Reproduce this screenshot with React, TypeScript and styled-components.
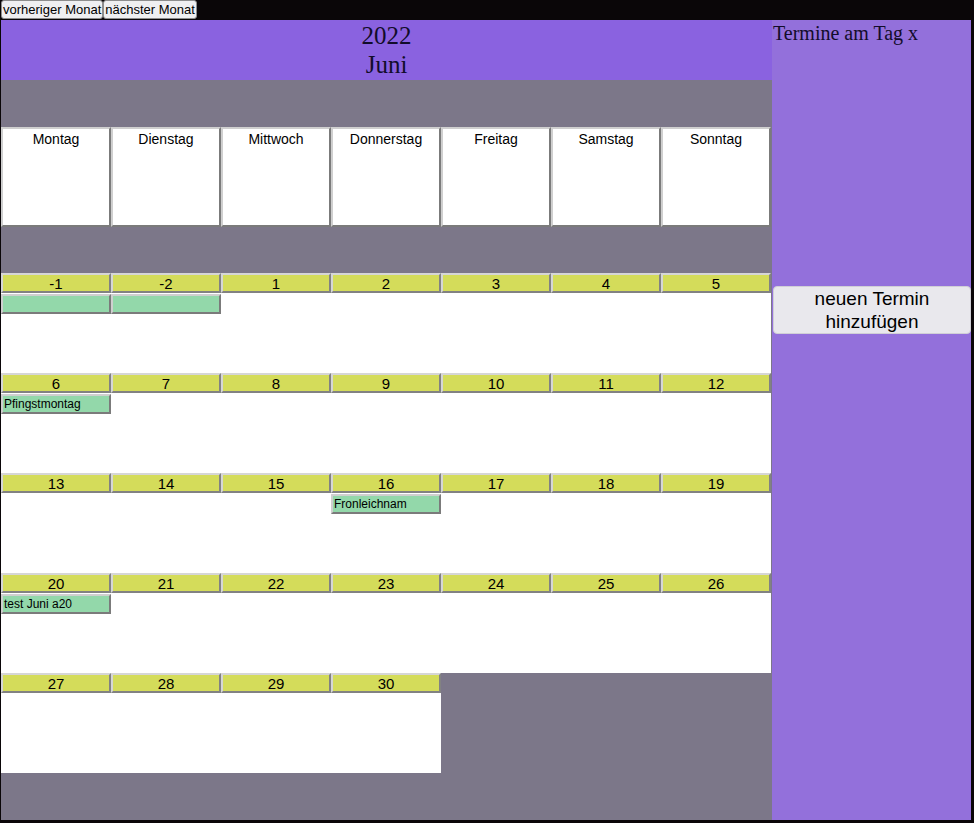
import React from "react";
import styled, { createGlobalStyle } from "styled-components";

const Global = createGlobalStyle`
  html, body { margin: 0; padding: 0; background: #0a0608; }
  body { font-family: "Liberation Serif", "Times New Roman", serif; }
`;

const Page = styled.div`
  width: 974px;
  height: 823px;
  background: #0a0608;
  display: flex;
  flex-direction: column;
  overflow: hidden;
`;

const TopBar = styled.div`
  height: 20px;
  display: flex;
  align-items: flex-start;
  padding-left: 1px;
`;

const NavButton = styled.button`
  height: 19px;
  padding: 0 1px;
  margin: 0;
  font-family: "Liberation Sans", Arial, sans-serif;
  font-size: 13px;
  color: #000;
  background: #efeff1;
  border: 1px solid #8d8d8d;
  border-radius: 3px;
  line-height: 17px;
`;

const Main = styled.div`
  display: flex;
  padding-left: 1px;
  height: 800px;
`;

const Calendar = styled.div`
  width: 771px;
  background: #7c7789;
  display: flex;
  flex-direction: column;
`;

const Header = styled.div`
  height: 60px;
  background: #8a62e0;
  display: flex;
  flex-direction: column;
  align-items: center;
  justify-content: center;
  font-family: "Liberation Serif", "Times New Roman", serif;
  font-size: 25px;
  line-height: 29px;
  color: #120c2a;
`;

const Spacer = styled.div<{ $h: number }>`
  height: ${(p) => p.$h}px;
`;

const Grid = styled.div`
  display: grid;
  grid-template-columns: repeat(7, 110px);
`;

const WeekdayCell = styled.div`
  height: 100px;
  box-sizing: border-box;
  background: #fff;
  border: 2px outset #cfcfcf;
  text-align: center;
  font-family: "Liberation Sans", Arial, sans-serif;
  font-size: 14px;
  padding-top: 2px;
  color: #000;
`;

const DayCell = styled.div<{ $empty?: boolean }>`
  height: 100px;
  background: ${(p) => (p.$empty ? "transparent" : "#fff")};
  display: flex;
  flex-direction: column;
`;

const DayNumber = styled.div`
  height: 20px;
  box-sizing: border-box;
  background: #d4dc5a;
  border: 2px outset #d6d6d6;
  text-align: center;
  font-family: "Liberation Sans", Arial, sans-serif;
  font-size: 15px;
  line-height: 17px;
  color: #000;
`;

const Event = styled.div`
  height: 20px;
  margin-top: 1px;
  box-sizing: border-box;
  background: #93d8aa;
  border: 2px outset #cfcfcf;
  font-family: "Liberation Sans", Arial, sans-serif;
  font-size: 12px;
  line-height: 16px;
  padding-left: 1px;
  color: #000;
  white-space: nowrap;
  overflow: hidden;
`;

const Sidebar = styled.div`
  width: 199px;
  background: #9370db;
  display: flex;
  flex-direction: column;
`;

const SideTitle = styled.div`
  font-family: "Liberation Serif", "Times New Roman", serif;
  font-size: 20px;
  line-height: 22px;
  color: #120c2a;
  padding-top: 2px;
  padding-left: 1px;
`;

const AddButton = styled.button`
  margin: 242px 0 0 1px;
  width: 198px;
  height: 48px;
  background: #e9e8ed;
  border: 1px solid #d0cfd6;
  border-radius: 4px;
  font-family: "Liberation Sans", Arial, sans-serif;
  font-size: 19px;
  line-height: 23px;
  color: #000;
  padding: 0;
`;

const weekdays = [
  "Montag",
  "Dienstag",
  "Mittwoch",
  "Donnerstag",
  "Freitag",
  "Samstag",
  "Sonntag",
];

type Day = { n?: string; events?: string[] };

const weeks: Day[][] = [
  [
    { n: "-1", events: [""] },
    { n: "-2", events: [""] },
    { n: "1" },
    { n: "2" },
    { n: "3" },
    { n: "4" },
    { n: "5" },
  ],
  [
    { n: "6", events: ["Pfingstmontag"] },
    { n: "7" },
    { n: "8" },
    { n: "9" },
    { n: "10" },
    { n: "11" },
    { n: "12" },
  ],
  [
    { n: "13" },
    { n: "14" },
    { n: "15" },
    { n: "16", events: ["Fronleichnam"] },
    { n: "17" },
    { n: "18" },
    { n: "19" },
  ],
  [
    { n: "20", events: ["test Juni a20"] },
    { n: "21" },
    { n: "22" },
    { n: "23" },
    { n: "24" },
    { n: "25" },
    { n: "26" },
  ],
  [{ n: "27" }, { n: "28" }, { n: "29" }, { n: "30" }, {}, {}, {}],
];

export default function App() {
  return (
    <Page>
      <Global />
      <TopBar>
        <NavButton>vorheriger Monat</NavButton>
        <NavButton>nächster Monat</NavButton>
      </TopBar>
      <Main>
        <Calendar>
          <Header>
            <div>2022</div>
            <div>Juni</div>
          </Header>
          <Spacer $h={47} />
          <Grid>
            {weekdays.map((w) => (
              <WeekdayCell key={w}>{w}</WeekdayCell>
            ))}
          </Grid>
          <Spacer $h={46} />
          <Grid>
            {weeks.flat().map((d, i) =>
              d.n === undefined ? (
                <DayCell key={i} $empty />
              ) : (
                <DayCell key={i}>
                  <DayNumber>{d.n}</DayNumber>
                  {(d.events || []).map((e, j) => (
                    <Event key={j}>{e}</Event>
                  ))}
                </DayCell>
              )
            )}
          </Grid>
        </Calendar>
        <Sidebar>
          <SideTitle>Termine am Tag x</SideTitle>
          <AddButton>
            neuen Termin
            <br />
            hinzufügen
          </AddButton>
        </Sidebar>
      </Main>
    </Page>
  );
}
